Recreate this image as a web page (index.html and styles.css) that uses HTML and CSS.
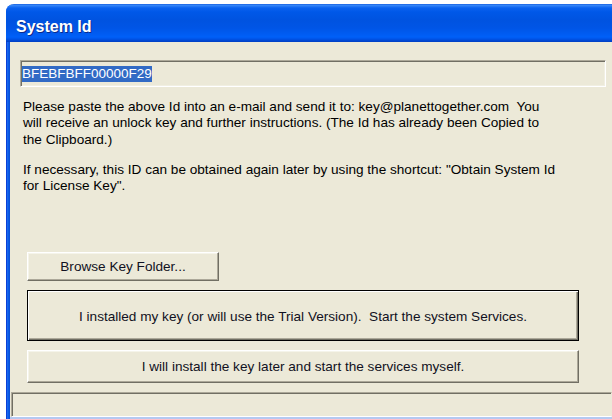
FILE: index.html
```html
<!DOCTYPE html>
<html lang="en">
<head>
<meta charset="utf-8">
<title>System Id</title>
<link rel="stylesheet" href="styles.css">
</head>
<body>
  <div class="window">
    <div class="titlebar"><span class="title">System Id</span></div>
    <div class="client">
      <div class="idbox"><span class="selected">BFEBFBFF00000F29</span></div>

      <p class="msg">Please paste the above Id into an e-mail and send it to: key@planettogether.com&nbsp; You<br>will receive an unlock key and further instructions. (The Id has already been Copied to<br>the Clipboard.)</p>
      <p class="msg msg-second">If necessary, this ID can be obtained again later by using the shortcut: "Obtain System Id<br>for License Key".</p>

      <div class="buttons">
        <button class="btn btn-browse" type="button">Browse Key Folder...</button>
        <button class="btn btn-wide btn-default" type="button">I installed my key (or will use the Trial Version).&nbsp; Start the system Services.</button>
        <button class="btn btn-wide btn-later" type="button">I will install the key later and start the services myself.</button>
      </div>

      <div class="status"></div>
    </div>
  </div>
</body>
</html>
```

FILE: styles.css
```css
html, body {
  margin: 0;
  padding: 0;
  background: #ffffff;
  overflow: hidden;
}

body {
  height: 419px;
  padding-top: 4px;
  box-sizing: border-box;
  font-family: "Liberation Sans", Arial, sans-serif;
}

/* Window shell: Luna-style frame; the view edge cuts its right side.
   The left 4px of the background is the blue side frame. */
.window {
  margin-left: 6px;
  width: 606px;
  height: 415px;
  border-top-left-radius: 8px;
  overflow: hidden;
  background: linear-gradient(to right,
    #0a3fd8 0, #0a3fd8 1px,
    #1668ee 1px, #1668ee 2px,
    #0a5ae6 2px, #0a5ae6 3px,
    #0650dc 3px, #0650dc 4px,
    #ece9d8 4px);
}

.titlebar {
  height: 38px;
  box-sizing: border-box;
  padding: 8px 0 0 10px;
  background:
    linear-gradient(to bottom,
      #0a4fd8 0px,
      #3d8df8 1px,
      #2a7cf6 2px,
      #0b62ee 4px,
      #0058e8 8px,
      #0053e0 16px,
      #0055e6 24px,
      #005cf2 30px,
      #0060f8 33px,
      #0054e8 35px,
      #0044cc 37px,
      #003ec4 38px);
}

.title {
  display: block;
  color: #ffffff;
  font-weight: bold;
  font-size: 16px;
  line-height: 30px;
  text-shadow: 1px 1px 0 #0b2a8c;
}

/* Dialog client area */
.client {
  margin-left: 4px;
  height: 377px;
  box-sizing: border-box;
  display: flex;
  flex-direction: column;
  background: #ece9d8;
  padding-top: 18px;
  border-bottom: 2px solid #b4c9f1;
  color: #000000;
  font-size: 13.6px;
}

.idbox {
  margin: 0 6px 0 10px;
  flex: 0 0 27px;
  box-sizing: border-box;
  padding: 0 1px;
  display: flex;
  align-items: center;
  border: 1px solid;
  border-color: #aca899 #ffffff #ffffff #aca899;
  box-shadow: inset 1px 1px 0 #716f64, inset -1px -1px 0 #f1efe2;
  background: #ece9d8;
}

.selected {
  background: #316ac5;
  color: #ffffff;
  font-size: 13.5px;
  line-height: 15px;
  padding-bottom: 1px;
}

.msg {
  margin: 12px 0 0 13px;
  line-height: 16.3px;
}

.msg-second {
  margin-top: 14px;
}

.buttons {
  margin-top: auto;
  margin-left: 17px;
  display: flex;
  flex-direction: column;
  align-items: flex-start;
  gap: 9px;
}

.btn {
  font-family: inherit;
  font-size: 13.6px;
  color: #111122;
  background: #ece9d8;
  box-sizing: border-box;
  padding: 0;
  margin: 0;
  border: 1px solid;
  border-color: #ffffff #716f64 #716f64 #ffffff;
  box-shadow: inset -1px -1px 0 #aca899, inset 1px 1px 0 #f5f4ea;
  cursor: default;
}

.btn-browse {
  width: 192px;
  height: 29px;
  padding-bottom: 1px;
}

.btn-wide {
  width: 552px;
}

.btn-default {
  height: 51px;
  border-color: #000000;
  box-shadow: inset 1px 1px 0 #ffffff, inset -1px -1px 0 #716f64, inset -2px -2px 0 #aca899;
  padding-top: 1px;
}

.btn-later {
  height: 33px;
}

/* Sunken status strip along the bottom */
.status {
  margin: 9px 0 0 1px;
  flex: 0 0 25px;
  box-sizing: border-box;
  border: 1px solid;
  border-color: #aca899 #ece9d8 #ffffff #aca899;
  box-shadow: inset 1px 1px 0 #716f64;
}
```
